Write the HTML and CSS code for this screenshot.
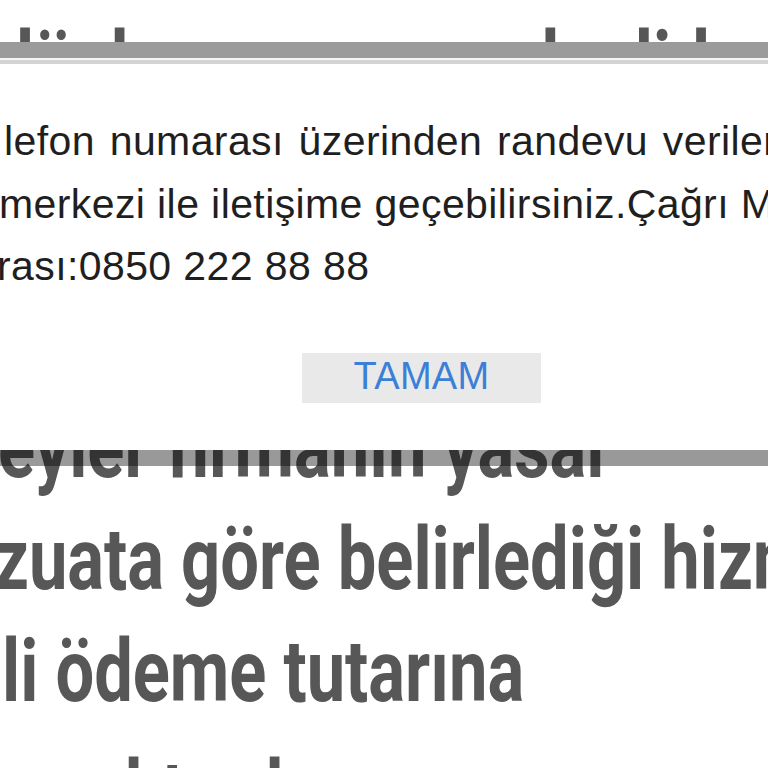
FILE: index.html
```html
<!DOCTYPE html>
<html lang="tr">
<head>
<meta charset="utf-8">
<title>Randevu</title>
<link rel="stylesheet" href="styles.css">
</head>
<body>
<div class="page">
  <div class="article">
    <p class="para para-top">
      <span class="line l-top">dünl arası sonra alanlidar ve ona et  ali</span>
    </p>
    <p class="para para-main">
      <span class="line l-a">eyler firmanın yasal</span>
      <span class="line l-b">zuata göre belirlediği hizmet</span>
      <span class="line l-c">li ödeme tutarına</span>
      <span class="line l-d">na aktarılır ve sonra</span>
    </p>
  </div>

  <div class="dialog">
    <div class="msg">
      <div class="mline m1">lefon numarası üzerinden randevu verilemiyor.</div>
      <div class="mline m2">merkezi ile iletişime geçebilirsiniz.Çağrı Merkezi</div>
      <div class="mline m3">rası:0850 222 88 88</div>
    </div>
    <div class="actions">
      <button class="btn">TAMAM</button>
    </div>
  </div>
</div>
</body>
</html>
```
FILE: styles.css
```css
html, body {
  margin: 0;
  padding: 0;
  background: #ffffff;
  overflow: hidden;
}
.page {
  position: relative;
  width: 768px;
  height: 768px;
  overflow: hidden;
}
.article {
  display: flex;
  flex-direction: column;
}
.para {
  margin: 0;
  display: flex;
  flex-direction: column;
  font-family: Roboto, "Liberation Sans", sans-serif;
  font-weight: 700;
  font-size: 88px;
  line-height: 112px;
  color: #575757;
}
.para-top {
  margin-top: 7px;
}
.para-main {
  margin-top: 272px;
}
.line {
  display: block;
  height: 112px;
  white-space: pre;
  transform: scaleX(0.78);
  transform-origin: left center;
}
.l-top { margin-left: -5px; }
.l-a { margin-left: -2px; }
.l-b { margin-left: -6px; }
.l-c { margin-left: 2px; }
.l-d { margin-left: -4px; margin-top: 9px; }

.dialog {
  position: absolute;
  top: 42px;
  left: -100px;
  width: 1043px;
  height: 392px;
  border-top: 16px solid #9b9b9b;
  border-bottom: 16px solid rgba(0, 0, 0, 0.4);
  background: #ffffff;
  background-clip: padding-box;
  box-shadow: inset 0 2px 0 #f6f6f6, inset 0 6px 0 #d4d4d4;
  display: flex;
  flex-direction: column;
}
.msg {
  padding-top: 52px;
  padding-left: 100px;
  font-family: "Liberation Sans", Arial, sans-serif;
  font-size: 41px;
  letter-spacing: 0.4px;
  line-height: 62.5px;
  color: #1f1f1f;
}
.mline {
  white-space: nowrap;
}
.m1 { margin-left: 4px; word-spacing: 3px; }
.m2 { margin-left: -1px; }
.m3 { margin-left: -3px; }

.actions {
  display: flex;
  justify-content: center;
  margin-top: 55px;
}
.btn {
  width: 239px;
  height: 50px;
  border: none;
  background: #e9e9e9;
  color: #3c7fd6;
  font-family: "Liberation Sans", Arial, sans-serif;
  font-size: 38px;
  letter-spacing: 0.3px;
  padding: 0 0 4px 0;
  line-height: 46px;
}
```
